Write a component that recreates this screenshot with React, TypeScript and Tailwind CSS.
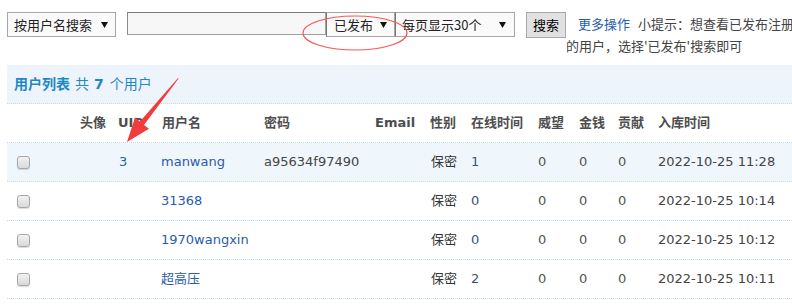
import React from "react";

const cols =
  "grid grid-cols-[73px_38px_43px_103px_111px_55px_41px_67px_41px_39px_40px_1fr]";

type Row = {
  uid: string;
  name: string;
  pwd: string;
  online: string;
  time: string;
  hover?: boolean;
};

const rows: Row[] = [
  { uid: "3", name: "manwang", pwd: "a95634f97490", online: "1", time: "2022-10-25 11:28", hover: true },
  { uid: "", name: "31368", pwd: "", online: "0", time: "2022-10-25 10:14" },
  { uid: "", name: "1970wangxin", pwd: "", online: "0", time: "2022-10-25 10:12" },
  { uid: "", name: "超高压", pwd: "", online: "2", time: "2022-10-25 10:11" },
];

function Arrow() {
  return (
    <svg width="7" height="6" viewBox="0 0 7 6" className="shrink-0">
      <polygon points="0,0 7,0 3.5,6" fill="#111" />
    </svg>
  );
}

export default function App() {
  return (
    <div className="relative w-[792px] h-[308px] overflow-hidden bg-white font-['DejaVu_Sans','Noto_Sans_CJK_SC',sans-serif] text-[13px] text-[#333]">
      {/* top bar */}
      <div className="flex items-start pt-[12px] pl-[7px] font-['Noto_Sans_CJK_SC','DejaVu_Sans',sans-serif]">
        <div className="shrink-0 w-[109px] h-[25px] border border-[#a6a6a6] bg-[#fafafa] flex items-center justify-between pl-[6px] pr-[7px] text-[#222]">
          <span>按用户名搜索</span>
          <Arrow />
        </div>
        <div className="shrink-0 ml-[11px] w-[199px] h-[23px] border border-[#a0a0a0] border-t-[#7a7a7a] border-l-[#8a8a8a] bg-[#f7f7f7]" />
        <div className="shrink-0 w-[69px] h-[25px] border border-[#a6a6a6] border-l-[#777] bg-[#fafafa] flex items-center justify-between pl-[7px] pr-[7px] text-[#222]">
          <span>已发布</span>
          <Arrow />
        </div>
        <div className="shrink-0 w-[120px] h-[25px] border border-[#a6a6a6] border-l-[#777] bg-[#fafafa] flex items-center justify-between pl-[6px] pr-[8px] text-[#222]">
          <span>每页显示30个</span>
          <Arrow />
        </div>
        <button className="shrink-0 ml-[11px] w-[40px] h-[26px] border border-[#a9a9a9] bg-[#e1e1e1] text-black flex items-center justify-center">
          搜索
        </button>
        <div className="w-[229px] shrink-0 mt-[1px] leading-[22px] text-[#444]">
          <a className="ml-[12px] mr-[8px] text-[#1f5fad]">更多操作</a>
          小提示：想查看已发布注册的用户，选择'已发布'搜索即可
        </div>
      </div>

      {/* panel */}
      <div className="ml-[7px] mt-[8px]">
        <div className="h-[39px] bg-[#edf4fb] flex items-center pl-[7px] text-[14px] text-[#1e88c6] border-b border-dotted border-[#c3dcef]">
          <span className="font-bold">用户列表</span>
          <span className="ml-[5px]">共</span>
          <span className="ml-[5px] font-bold">7</span>
          <span className="ml-[6px]">个用户</span>
        </div>
        <div className={`${cols} h-[39px] items-center font-bold text-[#4e4e4e] border-b border-dotted border-[#c3dcef]`}>
          <div />
          <div>头像</div>
          <div>UID</div>
          <div className="pl-[1px]">用户名</div>
          <div>密码</div>
          <div>Email</div>
          <div>性别</div>
          <div>在线时间</div>
          <div>威望</div>
          <div>金钱</div>
          <div>贡献</div>
          <div>入库时间</div>
        </div>
        {rows.map((r, i) => (
          <div
            key={i}
            className={`${cols} h-[39px] items-center border-b border-dotted border-[#c3dcef] ${r.hover ? "bg-[#f0f7fc]" : "bg-white"}`}
          >
            <div className="pl-[10px] flex items-center">
              <input
                type="checkbox"
                className="appearance-none w-[13px] h-[13px] rounded-[3px] border border-[#a7a7a7] bg-gradient-to-b from-[#f2f2f2] to-[#d9d9d9] shadow-[0_1px_1px_rgba(0,0,0,0.15)]"
              />
            </div>
            <div />
            <div className="pl-[1px] text-[#2d5fa8]">{r.uid}</div>
            <div className="text-[#2a5caa]">{r.name}</div>
            <div className="text-[#444]">{r.pwd}</div>
            <div />
            <div className="pl-[1px] text-[#333]">保密</div>
            <div className="text-[#3a5478]">{r.online}</div>
            <div className="text-[#555]">0</div>
            <div className="text-[#555]">0</div>
            <div className="text-[#555]">0</div>
            <div className="text-[#444]">{r.time}</div>
          </div>
        ))}
      </div>

      {/* annotations */}
      <svg className="absolute left-0 top-0 pointer-events-none" width="792" height="308">
        <ellipse cx="355" cy="33" rx="52" ry="17" fill="none" stroke="#f25a5a" strokeWidth="1.2" />
        <polygon
          points="127,142 135,117.6 140,121.6 178,78 178.6,78.4 144,125.1 149,128.8"
          fill="#f23c3c"
        />
      </svg>
    </div>
  );
}
